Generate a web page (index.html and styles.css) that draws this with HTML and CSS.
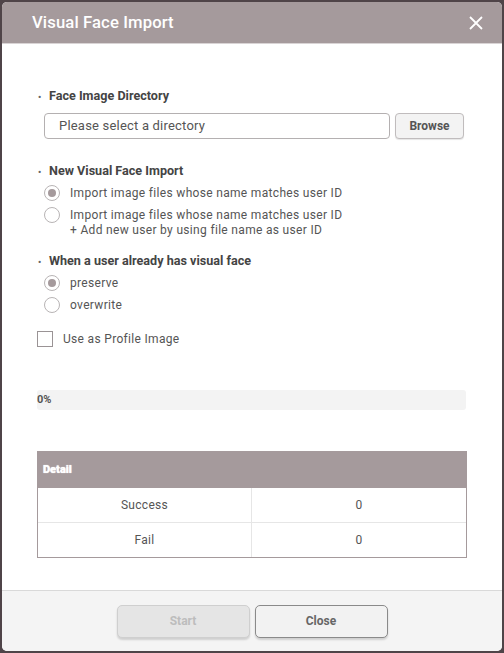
FILE: index.html
```html
<!DOCTYPE html>
<html>
<head>
<meta charset="utf-8">
<link rel="stylesheet" href="styles.css">
</head>
<body>
<div class="dialog">
  <div class="header">
    <div class="title">Visual Face Import</div>
    <svg class="close" width="14" height="14" viewBox="0 0 14 14"><path d="M1 1L13 13M13 1L1 13" stroke="#fff" stroke-width="1.8" fill="none"/></svg>
  </div>
  <div class="body">
    <div class="section first">
      <div class="label"><span class="dot">•</span>Face Image Directory</div>
      <div class="dirrow">
        <div class="input">Please select a directory</div>
        <div class="browse">Browse</div>
      </div>
    </div>
    <div class="section">
      <div class="label"><span class="dot">•</span>New Visual Face Import</div>
      <div class="opt"><span class="radio on"></span><span class="otext">Import image files whose name matches user ID</span></div>
      <div class="opt"><span class="radio"></span><span class="otext">Import image files whose name matches user ID<br>+ Add new user by using file name as user ID</span></div>
    </div>
    <div class="section">
      <div class="label"><span class="dot">•</span>When a user already has visual face</div>
      <div class="opt"><span class="radio on"></span><span class="otext">preserve</span></div>
      <div class="opt"><span class="radio"></span><span class="otext">overwrite</span></div>
    </div>
    <div class="check"><span class="box"></span><span class="ctext">Use as Profile Image</span></div>
    <div class="progress">0%</div>
    <div class="table">
      <div class="thead">Detail</div>
      <div class="trow"><div class="cell">Success</div><div class="cell">0</div></div>
      <div class="trow"><div class="cell">Fail</div><div class="cell">0</div></div>
    </div>
  </div>
  <div class="footer">
    <div class="btn start">Start</div>
    <div class="btn closebtn">Close</div>
  </div>
</div>
</body>
</html>
```
FILE: styles.css
```css
html, body { margin: 0; padding: 0; }
body {
  background: #4f4448;
  width: 504px;
  height: 653px;
  font-family: Roboto, "Liberation Sans", sans-serif;
  padding: 2px;
  box-sizing: border-box;
}
.dialog {
  width: 500px;
  height: 649px;
  background: #fff;
  border-radius: 5px;
  overflow: hidden;
  display: flex;
  flex-direction: column;
}
.header {
  height: 41px;
  background: #a59a9c;
  border-bottom: 1px solid #d9d4d5;
  display: flex;
  align-items: center;
  justify-content: space-between;
  padding: 0 19px 0 30px;
  flex: none;
}
.title {
  color: #fff;
  font-size: 16.7px;
  font-weight: 500;
  letter-spacing: 0.1px;
}
.body {
  flex: 1;
  padding: 0 35px 0 35px;
}
.section.first { padding-top: 44px; }
.label {
  font-size: 12.6px;
  font-weight: 700;
  color: #444;
  height: 16px;
  line-height: 16px;
}
.dot {
  display: inline-block;
  width: 12px;
  text-align: left;
  font-size: 9px;
  padding-left: 1px;
  box-sizing: border-box;
  color: #666;
}
.dirrow {
  display: flex;
  gap: 5px;
  margin: 9px 0 0 7px;
}
.input {
  width: 346px;
  height: 26px;
  box-sizing: border-box;
  border: 1px solid #b4b0b1;
  border-radius: 4px;
  font-size: 13px;
  color: #555;
  padding-left: 14px;
  line-height: 24px;
  letter-spacing: 0.2px;
}
.browse {
  width: 69px;
  height: 26px;
  box-sizing: border-box;
  border: 1px solid #c0bcbd;
  border-radius: 4px;
  background: #f3f3f3;
  font-size: 12px;
  font-weight: 700;
  color: #555;
  text-align: center;
  line-height: 24px;
  box-shadow: 0 1px 1px rgba(0,0,0,0.1);
}
.section:nth-child(2) { margin-top: 24px; }
.section:nth-child(3) { margin-top: 16px; }
.opt {
  display: flex;
  align-items: flex-start;
  margin-left: 7px;
  margin-top: 7px;
}
.radio {
  width: 16px;
  height: 16px;
  box-sizing: border-box;
  border: 1px solid #b8b4b5;
  border-radius: 50%;
  flex: none;
  position: relative;
  margin-top: -1px;
}
.radio.on::after {
  content: "";
  position: absolute;
  left: 3px; top: 3px;
  width: 8px; height: 8px;
  border-radius: 50%;
  background: #a59a9c;
}
.otext {
  margin-left: 10px;
  font-size: 12px;
  line-height: 14.5px;
  color: #555;
  letter-spacing: 0.32px;
}
.check {
  display: flex;
  align-items: center;
  margin-top: 18px;
}
.box {
  width: 16px;
  height: 16px;
  box-sizing: border-box;
  border: 1px solid #9a9395;
  flex: none;
}
.ctext {
  margin-left: 10px;
  font-size: 12px;
  color: #555;
  letter-spacing: 0.32px;
}
.progress {
  margin-top: 43px;
  height: 20px;
  width: 429px;
  background: #f3f3f3;
  border-radius: 3px;
  font-size: 11px;
  font-weight: 700;
  color: #555;
  line-height: 20px;
}
.table {
  margin-top: 41px;
  width: 430px;
  border: 1px solid #a59a9c;
  box-sizing: border-box;
  border-top: none;
}
.thead {
  height: 37px;
  background: #a59a9c;
  color: #fff;
  font-size: 11px;
  font-weight: 900;
  line-height: 37px;
  padding-left: 5px;
  text-shadow: 0 0 1px #fff;
}
.trow {
  display: flex;
  height: 34px;
}
.trow + .trow { border-top: 1px solid #e6e6e6; }
.cell {
  flex: 1;
  text-align: center;
  line-height: 34px;
  font-size: 12px;
  color: #555;
  letter-spacing: 0.3px;
}
.cell:first-child { flex: 0 0 213px; border-right: 1px solid #e6e6e6; }
.footer {
  height: 61px;
  flex: none;
  background: #f4f4f4;
  border-top: 1px solid #d9d9d9;
  display: flex;
  justify-content: center;
  align-items: flex-start;
  gap: 5px;
  padding-top: 14px;
  box-sizing: border-box;
}
.btn {
  width: 133px;
  height: 33px;
  box-sizing: border-box;
  border-radius: 5px;
  font-size: 12px;
  font-weight: 700;
  text-align: center;
  line-height: 31px;
  box-shadow: 0 2px 2px rgba(0,0,0,0.15);
}
.start {
  background: #e5e5e5;
  border: 1px solid #cfcfcf;
  color: #bdbdbd;
}
.closebtn {
  background: #f2f2f2;
  border: 1px solid #8a8a8a;
  color: #666;
}
```
